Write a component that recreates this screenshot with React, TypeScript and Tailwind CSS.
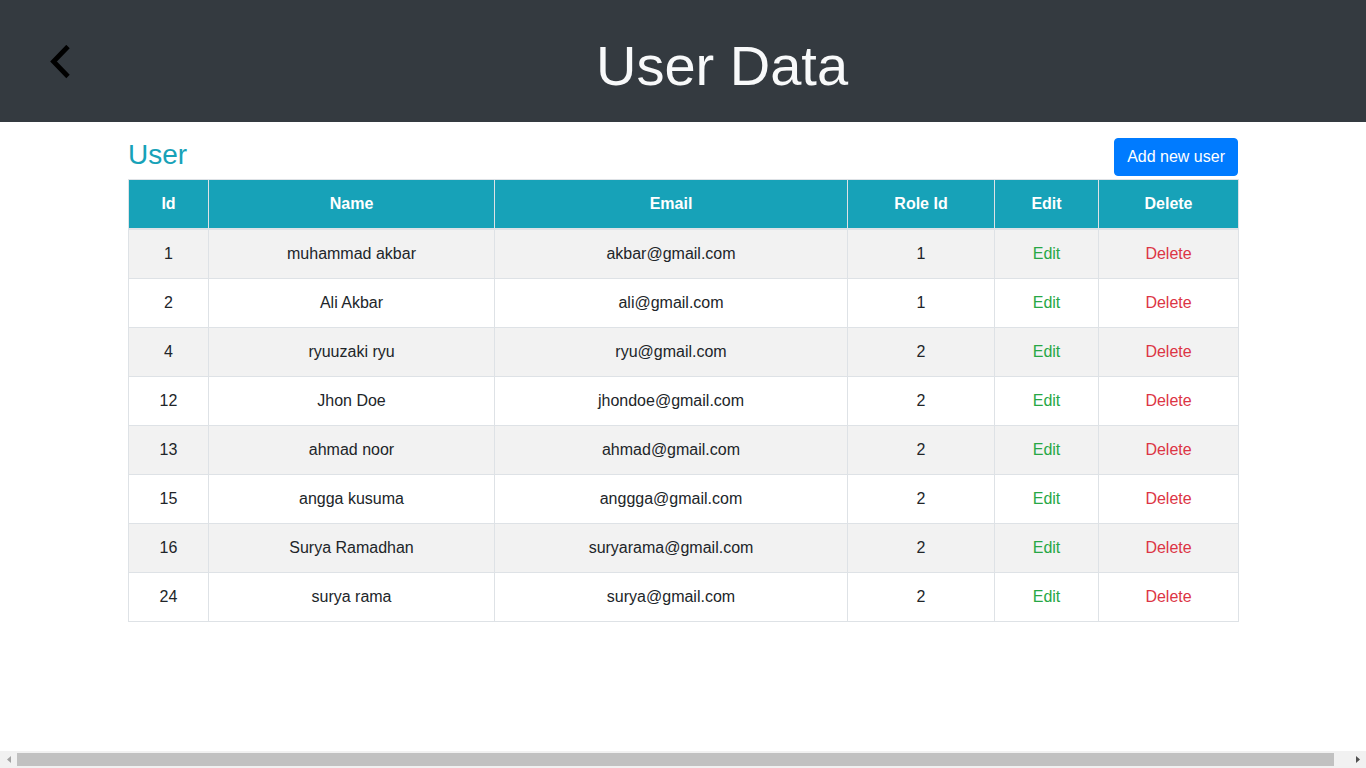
import React from "react";

const users = [
  { id: 1, name: "muhammad akbar", email: "akbar@gmail.com", role: 1 },
  { id: 2, name: "Ali Akbar", email: "ali@gmail.com", role: 1 },
  { id: 4, name: "ryuuzaki ryu", email: "ryu@gmail.com", role: 2 },
  { id: 12, name: "Jhon Doe", email: "jhondoe@gmail.com", role: 2 },
  { id: 13, name: "ahmad noor", email: "ahmad@gmail.com", role: 2 },
  { id: 15, name: "angga kusuma", email: "anggga@gmail.com", role: 2 },
  { id: 16, name: "Surya Ramadhan", email: "suryarama@gmail.com", role: 2 },
  { id: 24, name: "surya rama", email: "surya@gmail.com", role: 2 },
];

export default function App() {
  return (
    <div
      className="min-h-screen bg-white text-[#212529]"
      style={{ fontFamily: '"Liberation Sans", Arial, sans-serif' }}
    >
      <header className="flex h-[122px] items-center bg-[#343a40]">
        <div className="flex w-[78px] shrink-0 items-center pl-[50px]">
          <svg width="22" height="34" viewBox="0 0 22 34" className="mt-[1px]">
            <polyline
              points="18,1.5 3.5,16.5 18,31.5"
              fill="none"
              stroke="#000"
              strokeWidth="4.8"
            />
          </svg>
        </div>
        <h1 className="flex-1 text-center text-[56px] leading-none text-[#f8f9fa] mt-[10px]">
          User Data
        </h1>
      </header>

      <main className="mx-auto w-[1110px]">
        <div className="flex items-start justify-between pt-4 pb-[3px]">
          <h3 className="mt-[3px] text-[28px] leading-[28px] text-[#17a2b8]">User</h3>
          <button className="h-[38px] rounded border border-[#007bff] bg-[#007bff] px-3 text-base leading-6 text-white">
            Add new user
          </button>
        </div>
        <table className="w-full table-fixed border-collapse text-center text-base">
          <colgroup>
            <col className="w-[80px]" />
            <col className="w-[286px]" />
            <col className="w-[353px]" />
            <col className="w-[147px]" />
            <col className="w-[104px]" />
            <col className="w-[140px]" />
          </colgroup>
          <thead>
            <tr className="bg-[#17a2b8] text-white">
              {["Id", "Name", "Email", "Role Id", "Edit", "Delete"].map((h) => (
                <th
                  key={h}
                  className="border border-b-2 border-[#dee2e6] p-3 leading-6 font-bold"
                >
                  {h}
                </th>
              ))}
            </tr>
          </thead>
          <tbody>
            {users.map((u, i) => (
              <tr key={u.id} className={i % 2 === 0 ? "bg-[#f2f2f2]" : "bg-white"}>
                <td className="border border-[#dee2e6] p-3 leading-6">{u.id}</td>
                <td className="border border-[#dee2e6] p-3 leading-6">{u.name}</td>
                <td className="border border-[#dee2e6] p-3 leading-6">{u.email}</td>
                <td className="border border-[#dee2e6] p-3 leading-6">{u.role}</td>
                <td className="border border-[#dee2e6] p-3 leading-6 text-[#28a745]">Edit</td>
                <td className="border border-[#dee2e6] p-3 leading-6 text-[#dc3545]">Delete</td>
              </tr>
            ))}
          </tbody>
        </table>
      </main>

      <div className="fixed bottom-0 left-0 flex h-[17px] w-full items-center bg-[#f1f1f1]">
        <div className="flex h-full w-[17px] items-center justify-center">
          <svg width="4" height="7" viewBox="0 0 4 7">
            <polygon points="4,0 0,3.5 4,7" fill="#a3a3a3" />
          </svg>
        </div>
        <div className="h-[13px] flex-1 bg-[#c1c1c1]" />
        <div className="h-full w-[15px]" />
        <div className="flex h-full w-[17px] items-center justify-center">
          <svg width="4" height="7" viewBox="0 0 4 7">
            <polygon points="0,0 4,3.5 0,7" fill="#505050" />
          </svg>
        </div>
      </div>
    </div>
  );
}
